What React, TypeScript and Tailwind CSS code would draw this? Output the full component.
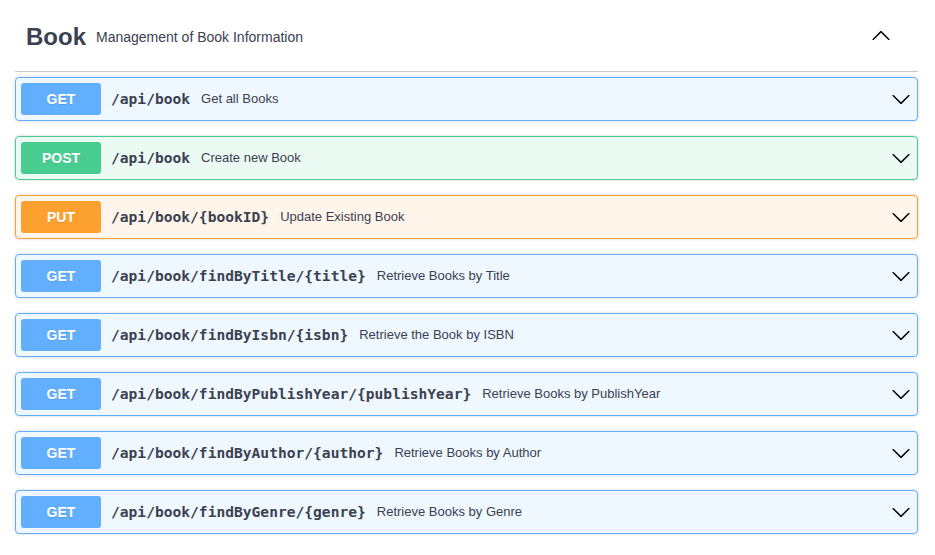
type Method = 'GET' | 'POST' | 'PUT'

type Operation = {
  method: Method
  path: string
  summary: string
}

const operations: Operation[] = [
  { method: 'GET', path: '/api/book', summary: 'Get all Books' },
  { method: 'POST', path: '/api/book', summary: 'Create new Book' },
  { method: 'PUT', path: '/api/book/{bookID}', summary: 'Update Existing Book' },
  { method: 'GET', path: '/api/book/findByTitle/{title}', summary: 'Retrieve Books by Title' },
  { method: 'GET', path: '/api/book/findByIsbn/{isbn}', summary: 'Retrieve the Book by ISBN' },
  { method: 'GET', path: '/api/book/findByPublishYear/{publishYear}', summary: 'Retrieve Books by PublishYear' },
  { method: 'GET', path: '/api/book/findByAuthor/{author}', summary: 'Retrieve Books by Author' },
  { method: 'GET', path: '/api/book/findByGenre/{genre}', summary: 'Retrieve Books by Genre' },
]

const methodStyles: Record<Method, { block: string; badge: string }> = {
  GET: { block: 'border-[#61affe] bg-[#61affe]/10', badge: 'bg-[#61affe]' },
  POST: { block: 'border-[#49cc90] bg-[#49cc90]/10', badge: 'bg-[#49cc90]' },
  PUT: { block: 'border-[#fca130] bg-[#fca130]/10', badge: 'bg-[#fca130]' },
}

function Arrow({ up = false }: { up?: boolean }) {
  return (
    <svg width="20" height="20" viewBox="0 0 20 20" className={up ? 'rotate-180' : ''} fill="#000">
      <path d="M17.418 6.109c.272-.268.709-.268.979 0s.271.701 0 .969l-7.908 7.83c-.27.268-.707.268-.979 0l-7.908-7.83c-.27-.268-.27-.701 0-.969.271-.268.709-.268.979 0L10 13.25l7.418-7.141z" />
    </svg>
  )
}

function OperationRow({ op }: { op: Operation }) {
  const style = methodStyles[op.method]
  return (
    <div
      className={`mb-[15px] flex h-[44px] items-center rounded border p-[5px] pr-[6px] shadow-[0_0_3px_rgba(0,0,0,0.19)] ${style.block}`}
    >
      <span
        className={`flex h-[32px] w-[80px] shrink-0 items-center justify-center rounded-[3px] text-[14px] font-bold text-white [text-shadow:0_1px_0_rgba(0,0,0,0.1)] ${style.badge}`}
      >
        {op.method}
      </span>
      <span className="pl-[10px] pr-[11px] font-['DejaVu_Sans_Mono',monospace] text-[14.6px] font-bold text-[#3b4151]">
        {op.path}
      </span>
      <span className="flex-1 text-[13px] text-[#3b4151]">{op.summary}</span>
      <Arrow />
    </div>
  )
}

export default function App() {
  return (
    <div className="min-h-screen bg-white font-['Liberation_Sans',Arial,sans-serif]">
      <div className="ml-[15px] w-[903px]">
        <div className="flex h-[72px] items-center border-b border-[#3b4151]/30 pl-[11px] pr-[27px] pt-[1px]">
          <span className="pt-[1px] text-[24px] font-bold text-[#3b4151]">Book</span>
          <span className="flex-1 px-[10px] pt-[3px] text-[14px] text-[#3b4151]">Management of Book Information</span>
          <Arrow up />
        </div>
        <div className="mt-[5px]">
          {operations.map((op, i) => (
            <OperationRow key={i} op={op} />
          ))}
        </div>
      </div>
    </div>
  )
}
